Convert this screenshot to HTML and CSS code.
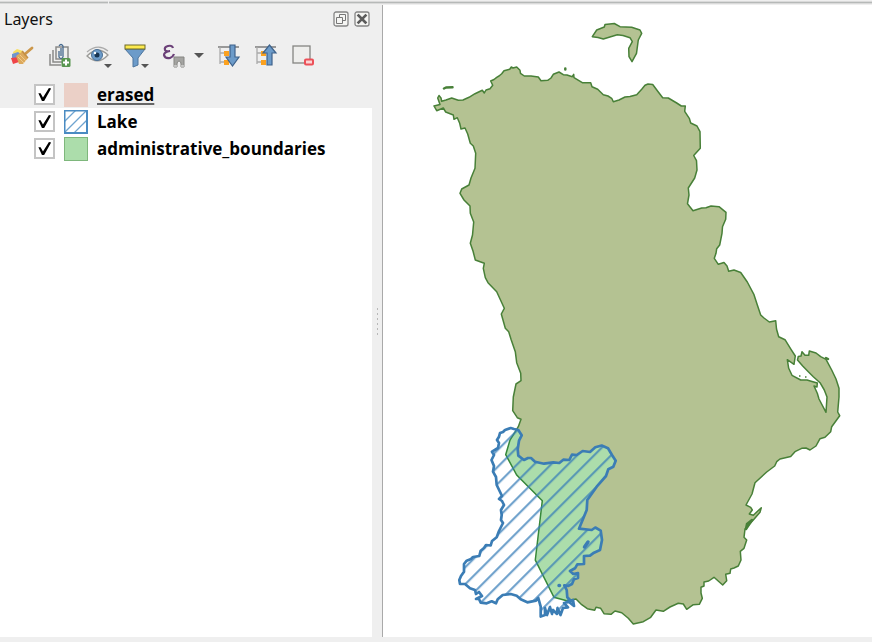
FILE: index.html
```html
<!DOCTYPE html>
<html lang="en">
<head>
<meta charset="utf-8">
<title>Layers</title>
<link rel="stylesheet" href="styles.css">
</head>
<body>
<div class="app">
  <div class="topbar"><span class="topbar-left"></span><span class="topbar-right"></span></div>
  <main class="workspace">
    <section class="panel">
      <header class="panel-title">
        <h1>Layers</h1>
        <button class="window-button" aria-label="Float panel">
          <svg viewBox="0 0 16 16"><rect x="1" y="1" width="14" height="14" rx="2" fill="#f5f5f3" stroke="#858585" stroke-width="1.300"/><path d="M6.500 6V3.500H12.500V9.500H10M3.500 6.500H9.500V12.500H3.500Z" fill="none" stroke="#777"/></svg>
        </button>
        <button class="window-button" aria-label="Close panel">
          <svg viewBox="0 0 16 16"><rect x="1" y="1" width="14" height="14" rx="2" fill="#f5f5f3" stroke="#858585" stroke-width="1.300"/><path d="M4.500 4.500L11.500 11.500M11.500 4.500L4.500 11.500" stroke="#5c5c5c" stroke-width="2.600" stroke-linecap="square"/></svg>
        </button>
      </header>
      <div class="toolbar">
        <div class="tools">
          <button class="tool" aria-label="Open layer styling">
            <svg viewBox="0 0 24 24"><path d="M3 8L7 5L13 7L9 13L4 13Z" fill="#f7df62"/><path d="M2 10L8 8L13 12L8 15L2 14Z" fill="#7095cf"/><path d="M1 14L9 13L9 18L3 20Z" fill="#ef4448"/><path d="M6 12L13 7L18 14L13 20L9 20Z" fill="#dca95c"/><path d="M8 13L14 19M10 11L16 17" stroke="#efc98a"/><path d="M15 10L22 4" stroke="#cc974a" stroke-width="2.800" stroke-linecap="round"/><path d="M12 7L18 14" stroke="#c48f45" stroke-width="1.500"/></svg>
          </button>
          <button class="tool" aria-label="Add group">
            <svg viewBox="0 0 24 24" fill="none"><path d="M2 10V21H13M5 6V18H15" stroke="#8b8b89" stroke-width="1.500"/><path d="M8 3H20V15H8Z" fill="#eeeeec" stroke="#8b8b89" stroke-width="1.500"/><path d="M11 7V13Q13 16 15 13V2Q13-1 11 2" stroke="#45698e" stroke-width="1.300"/><path d="M13 4V12" stroke="#45698e" stroke-width="1.300"/><rect x="13.500" y="14" width="9" height="9" rx="1.500" fill="#57954f"/><path d="M18 15.500V21.500M15 18.500H21" stroke="white" stroke-width="2"/></svg>
          </button>
          <button class="tool" aria-label="Manage map themes">
            <svg viewBox="0 0 24 24" fill="none"><path d="M1 12Q12 1 22 11Q12 22 1 12Z" fill="#f7f7f5" stroke="#9b9b98" stroke-width="1.300"/><path d="M1 8Q12-1 22 7" stroke="#aaa" stroke-width="1.200"/><circle cx="11" cy="11" r="5.500" fill="#6b9bc9" stroke="#4b7095"/><circle cx="11" cy="11" r="2.500" fill="#183552"/><circle cx="9" cy="9" r="1.200" fill="white"/><path d="M18 20H26L22 24Z" fill="#555"/></svg>
          </button>
          <button class="tool" aria-label="Filter legend">
            <svg viewBox="0 0 24 24"><path d="M1 5L9 14V23L14 21V14L21 5Z" fill="#6c9bc9" stroke="#4d759d"/><rect x="1" y="1" width="20" height="4" fill="#fcea4f" stroke="#6f6a28"/><path d="M17 20H25L21 24Z" fill="#555"/></svg>
          </button>
          <button class="tool tool-menu" aria-label="Filter legend by expression">
            <svg viewBox="0 0 24 24" fill="none"><path d="M11 4Q10 1 6 2Q2 3 3 6Q4 8 8 7Q2 8 2 11Q3 15 8 14Q11 13 12 10" stroke="#6b4078" stroke-width="2.200"/><path d="M12 13H22V23H19V20Q19 17 17 17Q15 17 15 20V23H12Z" fill="#a4a4a1" stroke="#858582"/><path d="M12 22H15M19 22H22" stroke="#eee"/></svg>
            <svg class="menu-arrow" viewBox="0 0 12 12"><path d="M1 3H11L6 8Z" fill="#555"/></svg>
          </button>
        </div>
        <div class="tools tools-tree">
          <button class="tool" aria-label="Expand all">
            <svg viewBox="0 0 24 24"><path d="M1 3H22" stroke="#999" stroke-width="2"/><path d="M3 3V20M3 9H8M3 18H8" stroke="#aaa" fill="none" stroke-width="1.300"/><path d="M7 7H12V12H7ZM7 16H12V21H7Z" fill="#fba11f"/><path d="M13 1H18V13H22L15.500 22L9 13H13Z" fill="#6c9bc9" stroke="#3e628b" stroke-width="1.200"/></svg>
          </button>
          <button class="tool" aria-label="Collapse all">
            <svg viewBox="0 0 24 24"><path d="M1 3H22" stroke="#999" stroke-width="2"/><path d="M3 3V20M3 9H8M3 18H8" stroke="#aaa" fill="none" stroke-width="1.300"/><path d="M7 7H12V12H7ZM7 16H12V21H7Z" fill="#fba11f"/><path d="M13 21H18V9H22L15.500 1L9 9H13Z" fill="#6c9bc9" stroke="#3e628b" stroke-width="1.200"/></svg>
          </button>
          <button class="tool" aria-label="Remove layer">
            <svg viewBox="0 0 24 24"><rect x="2" y="2" width="17" height="17" fill="#eeeeec" stroke="#858582" stroke-width="1.300"/><rect x="14" y="15.500" width="8" height="5" rx="1" fill="#fbd5d5" stroke="#ec5058" stroke-width="2"/></svg>
          </button>
        </div>
      </div>
      <ul class="layers">
        <li class="layer layer-selected">
          <input type="checkbox" id="layer-erased" checked>
          <span class="swatch swatch-erased"></span>
          <label for="layer-erased">erased</label>
        </li>
        <li class="layer">
          <input type="checkbox" id="layer-lake" checked>
          <svg class="swatch" viewBox="0 0 24 24"><rect width="24" height="24" fill="#fff"/><path d="M0 12L12 0M0 23L23 0M9 24L24 9" stroke="#6fa4d0" stroke-width="1.300"/><path d="M0 .5H23V23H.5V0" fill="none" stroke="#4a8bc2" stroke-width="2"/></svg>
          <label for="layer-lake">Lake</label>
        </li>
        <li class="layer">
          <input type="checkbox" id="layer-boundaries" checked>
          <span class="swatch swatch-boundaries"></span>
          <label for="layer-boundaries">administrative_boundaries</label>
        </li>
      </ul>
    </section>
    <div class="splitter"><i></i><i></i><i></i><i></i><i></i><i></i></div>
    <section class="map">
      <svg viewBox="383 5 489 632" role="img" aria-label="Map">
        <defs>
          <path id="land" d="M434 106L440 104.500L437.700 98L439 95.500L441 98L441.700 101.300L446 100L451.700 98L458.300 100.300L463 100L469 97.300L475 93.700L482.300 90.300L484.300 93L486 90L490 88.700L492.700 85.300L490.700 81L494 79.500L496.700 77.300L499 76L501.700 73.700L504 70.700L509.700 69.300L511.300 67L513 68L516.700 67L520 70.300L520.500 73.300L524.300 76L531 76L538.300 77L541 80.700L547.700 80.300L551 78L553.300 74.300L559 72L563.300 74.700L567 75L572.300 76.700L573.700 74.300L574 77.700L582.300 82.700L590.700 82.700L592 86.700L597.700 89.300L603.300 94.700L608 96L611.700 98.300L613.300 101.700L619 100L625 97L630 96.500L636.700 94.700L641.700 89.300L645 85.300L648 84L652.700 84.500L658.300 92L662.700 97.700L668.300 98L676.700 103L681.300 106L685.300 106L684.700 111.300L689.300 118.300L690.700 123L697 126L700 131.700L700.300 148.300L693.700 155.500L696.500 160.700L697 170L694.700 178L688.300 188L689 195L687.500 203.700L693 210.700L701.700 208L706 207.700L711 206L719 206.700L726 212.300L725.700 219.300L722.500 226.700L722 233.300L719.700 245L716.700 248.700L716 253.300L714.300 258.300L718.300 264.300L724 262.500L727 266L728.700 271.300L734 270L740.700 272.500L747.300 282L754 294.700L757 304L760.700 315L764 318L769.300 322L775.700 320.700L776.500 329L778.700 336.700L785 339.700L791 349.300L795.300 356L794 364.300L787.300 359.700L788.700 368.300L792 375.300L800.700 380L807 380L812 381.500L817.300 383L817 387L814 386L817.300 393.300L819 399L826 412.300L827 397L824.300 390L820 382.700L813.300 376.700L808.300 371.700L802.700 366L797.500 360L798.300 356.500L801 356L802 351.700L805 355.300L808.700 355.300L809.300 351L816 353L820.700 356.700L826 359.300L831.700 370L836 379L839 388.300L839 397L837.700 412L839.700 415.700L831.700 426.700L830.700 431.700L825 437.300L820 438.700L816 446L810 450L806 448L801.700 448.300L795 451.700L790.700 456.500L780 459L776.700 461.700L774.700 466L766.700 472L755 482.700L752 494L746 505L750.700 507.300L752.300 510L749.300 514L753.300 515.300L761.300 507.700L760 512.300L753.300 520L745 529L744 537.300L746.700 540L744 548.300L740.300 551.300L741 560L738.300 566L734 568L730.700 569L730 573.300L725.700 574.300L726.700 580.700L722.700 585L719.300 582L714 577.300L708.700 581L704 582L704 586L701 587.300L701 593L702.300 598.300L699.300 604.300L693.300 604.700L686.700 609.300L683.300 604L678.300 603.300L670 607L663.300 611.300L656 610L650.700 617.300L643.300 621.700L633.300 624L628.300 618.300L621.700 612.700L615 611L611 614.300L604 613.700L600.700 608.300L596 607.300L594.700 610.300L587.300 608.700L581.700 604.700L576 599L566.700 600.700L554 597.300L535.300 560L542.300 500.700L516.700 475L505.700 454.700L510 440L518.300 426.700L521 419.300L517.300 417.700L512.700 410.700L513.300 397L516 384L521 380.700L520.700 373.300L516.700 362.700L515.300 351.700L511 339.300L508.700 331.700L505.300 328.300L501.300 314L504.300 308.300L496.700 291.700L488 282.700L485.300 277.700L483.300 268.300L484.300 263.300L475.300 260L473 251L470.300 243.300L472.500 235L473.700 222L470.300 213.300L470 206L464 200L460 193.300L461.700 189L469 185L471 178L475 168.300L475.700 153.300L473.300 146L470.300 143.300L467.700 134L465 128L461 129L459.700 123.300L457.300 117.700L454 119.300L453.300 115L445.700 112L443.300 108L436.700 110.700Z"/>
          <path id="lake" d="M499 436.700L500 433L503 432L505 430L510.700 428L514 429L518.300 430L521.700 435.300L519 440.700L517.700 449.300L518.300 455.700L524 460L528 458L531 458L535 461.700L544 463.700L553.300 462.300L559.300 463L563.300 459.700L569.300 460L572 454.700L576.700 455L582.700 451L590 452L595.300 447.300L601.700 445.500L608 448.300L612 455L615.700 460.700L613.300 466.700L608.300 469.300L606 476L596.700 486.700L587.300 500L586.700 510L579 528.700L591.700 530L595.300 527.500L600.700 530.700L602 540L600 550L594 552.700L590 555.700L584 556L584 564L577.300 564.300L575 568.300L570 571L573.300 574L578 573L578 578L574 579.300L572 584L568 586L564.300 585.300L566.700 590L567.300 597.300L571 601L573 600L574 606L569 602L564 603L568 607.300L563 608L560.500 615L557.500 608L557 614L553 610L552 614L550 607L547 615L545 608L545 615L540.700 616.500L540.700 606.700L538.300 598L536 600.700L527.300 602.300L520.700 599.300L516.700 595.700L510.700 594L502.700 595L497.700 599.300L496 603.300L491.700 601.300L486.700 603.300L480.700 602.700L479 599L476 599L482 596L479 592L476 594L475 590L470 588.300L465 584L460 584L459.300 580L461 576L464 571.700L464 564L466.700 560.700L471 559L473 557L479.300 556L480.700 550.700L484 548L486 545L490.700 545.500L492 541L496.700 537.300L499 531L503 523L501 520L501.700 515L501 510L504 505L502 501L499 499L502 496L496.700 485L496 477L493 471.700L494 466L491.500 460L494 455L492 451.700L498 448L499 443L497 440Z"/>
          <clipPath id="lake-clip"><use href="#lake"/></clipPath>
          <pattern id="hatch" patternUnits="userSpaceOnUse" width="12" height="12" patternTransform="translate(507 490) rotate(-45)"><rect width="12" height="2.200" fill="#377eb8" opacity=".7"/></pattern>
        </defs>
        <g fill="#b4c292" stroke="#488038" stroke-width="1.500" stroke-linejoin="round">
          <use href="#land"/>
          <path d="M592.300 36.700L596.700 30L604.300 27L605 24.500L614.300 23.500L620 26.700L631.700 27.300L640 30L641.700 33.300L638.300 40L636.500 53.300L632 61.700L629 56.700L628.700 48.300L632.300 41.700L630 37.700L623 35.500L617.300 34.700L603.300 39L598 37.500Z"/>
          <path d="M444 88.500L446 87.500L452.500 87.300M565.300 68.500V69.500M746 529L752 520L747 524ZM826 358L828 359" stroke-width="2.500" stroke-linecap="round"/>
          <path d="M799 376H800.500M805 377H806.500"/>
        </g>
        <use href="#lake" fill="#fff"/>
        <use href="#land" fill="#acddab" stroke="#37883a" stroke-width="1.500" clip-path="url(#lake-clip)"/>
        <use href="#lake" fill="url(#hatch)" stroke="#3b7db5" stroke-width="2.700" stroke-linejoin="round"/>
        <path d="M584.500 547L588 542M559 585.500H559.500" stroke="#3b7db5" stroke-width="3.500" stroke-linecap="round"/>
      </svg>
    </section>
  </main>
  <footer class="statusbar"></footer>
</div>
</body>
</html>
```

FILE: styles.css
```css
* { box-sizing: border-box; }

body {
  margin: 0;
  background: #efefef;
  color: #111;
  font-family: "Noto Sans", "Open Sans", sans-serif;
  font-size: 16px;
}

.app {
  display: flex;
  flex-direction: column;
  height: 100vh;
}

.topbar {
  display: flex;
  gap: 1px;
  height: 5px;
  padding-top: 1px;
}

.topbar span {
  height: 3px;
  border-top: 1px solid #dadada;
  border-bottom: 1px solid #dadada;
  background: #b6b9b8;
}

.topbar-left { width: 108px; }
.topbar-right { flex: 1; }

.workspace {
  display: flex;
  flex: 1;
  min-height: 0;
}

.panel {
  display: flex;
  flex-direction: column;
  width: 372px;
}

.panel-title {
  display: flex;
  align-items: center;
  gap: 5px;
  height: 28px;
  padding: 0 2px 0 4px;
}

.panel-title h1 {
  flex: 1;
  margin: 0;
  font-size: 16px;
  font-weight: 400;
  line-height: 28px;
}

button {
  padding: 0;
  border: 0;
  background: none;
}

.window-button, .window-button svg {
  display: block;
  width: 16px;
  height: 16px;
}

.toolbar {
  display: flex;
  align-items: center;
  gap: 12px;
  height: 48px;
  padding: 0 0 2px 10px;
}

.tools {
  display: flex;
  gap: 14px;
}

.tools-tree { gap: 13px; }

.tool {
  display: flex;
  align-items: center;
  gap: 7px;
}

.tool svg {
  display: block;
  width: 24px;
  height: 24px;
  overflow: visible;
}

.tool .menu-arrow {
  width: 12px;
  height: 12px;
}

.layers {
  flex: 1;
  margin: 0;
  padding: 0;
  background: #fff;
  color: #000;
  list-style: none;
}

.layer {
  display: flex;
  align-items: center;
  height: 27px;
  padding-left: 34px;
  font-family: "Open Sans", "Noto Sans", sans-serif;
  font-size: 17px;
  font-weight: 700;
}

.layer-selected { background: #efefef; }

.layer-selected label {
  text-decoration: underline 2px #666;
  text-underline-offset: 2px;
}

.layer input {
  width: 21px;
  height: 21px;
  margin: 0 9px 0 0;
  border: 2px solid #c4c4c4;
  background: #fff;
  appearance: none;
}

.layer input:checked::before {
  display: block;
  width: 17px;
  height: 17px;
  background: #000;
  clip-path: polygon(14% 43%, 27% 42%, 41% 67%, 76% 12%, 89% 15%, 48% 88%, 35% 88%);
  content: "";
}

.swatch {
  width: 24px;
  height: 24px;
  margin-right: 9px;
}

.swatch-erased { background: #ebd0c7; }

.swatch-boundaries {
  border: 1px solid #7eb77c;
  background: #acddab;
}

.splitter {
  display: flex;
  flex-direction: column;
  align-items: center;
  justify-content: center;
  gap: 3px;
  width: 11px;
  border-right: 1px solid #a9a9a9;
}

.splitter i {
  width: 1px;
  height: 2px;
  background: #b8b8b8;
}

.map {
  flex: 1;
  min-width: 0;
  background: #fff;
}

.map > svg {
  display: block;
  width: 100%;
  height: 100%;
}

.statusbar { height: 5px; }
```
